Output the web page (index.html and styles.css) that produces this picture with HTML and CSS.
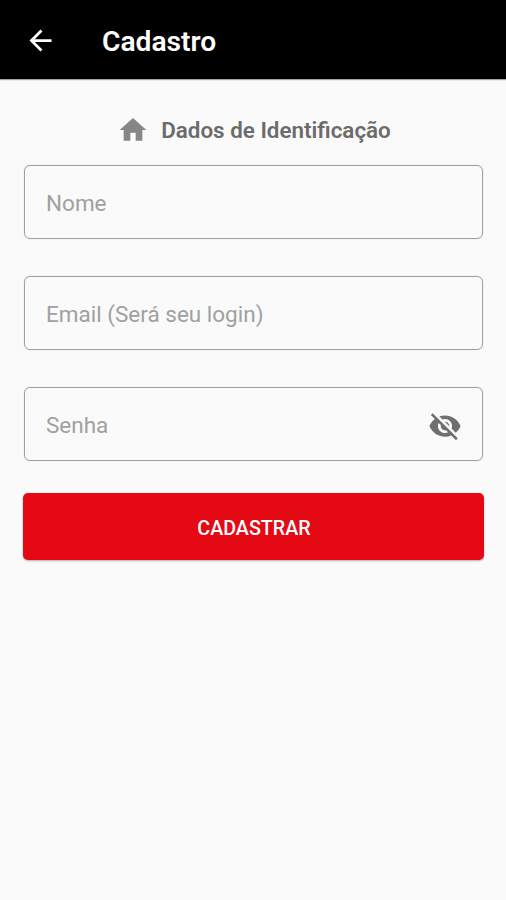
FILE: index.html
```html
<!DOCTYPE html>
<html lang="pt-BR">
<head>
<meta charset="utf-8">
<title>Cadastro</title>
<link rel="stylesheet" href="styles.css">
</head>
<body>
<header class="app-bar">
  <svg class="back" viewBox="0 0 24 24" aria-hidden="true"><path d="M20 11H7.83l5.59-5.59L12 4l-8 8 8 8 1.41-1.41L7.83 13H20v-2z"/></svg>
  <h1 class="title">Cadastro</h1>
</header>
<main class="form">
  <div class="section">
    <svg class="home" viewBox="0 0 24 24" aria-hidden="true"><path d="M10 20v-6h4v6h5v-8h3L12 3 2 12h3v8z"/></svg>
    <h2 class="section-title">Dados de Identificação</h2>
  </div>
  <div class="field"><span class="label">Nome</span></div>
  <div class="field"><span class="label">Email (Será seu login)</span></div>
  <div class="field password"><span class="label">Senha</span>
    <svg class="eye" viewBox="0 0 24 24" aria-hidden="true"><path d="M12 7c2.76 0 5 2.24 5 5 0 .65-.13 1.26-.36 1.83l2.92 2.92c1.51-1.26 2.7-2.89 3.43-4.75-1.73-4.39-6-7.5-11-7.5-1.4 0-2.74.25-3.98.7l2.16 2.16C10.74 7.13 11.35 7 12 7zM2 4.27l2.28 2.28.46.46C3.08 8.3 1.78 10.02 1 12c1.73 4.39 6 7.5 11 7.5 1.55 0 3.03-.3 4.38-.84l.42.42L19.73 22 21 20.73 3.27 3 2 4.27zM7.53 9.8l1.55 1.55c-.05.21-.08.43-.08.65 0 1.66 1.34 3 3 3 .22 0 .44-.03.65-.08l1.55 1.55c-.67.33-1.41.53-2.2.53-2.76 0-5-2.24-5-5 0-.79.2-1.53.53-2.2zm4.31-.78l3.15 3.15.02-.16c0-1.66-1.34-3-3-3l-.17.01z"/></svg>
  </div>
  <button class="submit" type="button">CADASTRAR</button>
</main>
</body>
</html>
```

FILE: styles.css
```css
* { box-sizing: border-box; }
body {
  margin: 0;
  min-height: 900px;
  background: #fafafa;
  font-family: Roboto, "Liberation Sans", sans-serif;
}
.app-bar {
  height: 79px;
  padding: 3px 24px 0;
  display: flex;
  align-items: center;
  background: #000;
  color: #fff;
  box-shadow: 0 1px 1px rgba(0, 0, 0, .35);
}
.back { width: 33px; height: 33px; margin: -2px 0 0 -.5px; fill: #fff; }
.title { margin: 2px 0 0 45.5px; font-size: 28.2px; line-height: 32px; font-weight: 600; }
.form { padding: 35px 23px 0 24px; display: flex; flex-direction: column; }
.section { height: 34px; margin-bottom: 17px; padding-left: 1px; display: flex; justify-content: center; align-items: center; gap: 12px; }
.home { width: 32px; height: 32px; margin-top: -3px; fill: #868686; }
.section-title { margin: -2px 0 0; font-size: 22.4px; line-height: 28px; font-weight: 600; color: #6b6b6b; }
.field {
  height: 74px;
  margin-bottom: 37px;
  padding: 2px 20px 0;
  display: flex;
  align-items: center;
  justify-content: space-between;
  border: 1px solid #a0a0a0;
  border-radius: 6px;
  box-shadow: 0 0 1px rgba(0, 0, 0, .3);
}
.label { margin-top: -1px; padding-left: 1px; font-size: 22.5px; color: #a0a0a0; }
.eye { width: 34px; height: 34px; margin-top: 1px; fill: #6f6f6f; }
.password { margin-bottom: 32px; }
.submit {
  height: 67px;
  margin: 0 -1px;
  padding: 3px 0 0 1px;
  border: 0;
  border-radius: 5px;
  background: #e50914;
  color: #fff;
  font: 500 19.7px Roboto, sans-serif;
  box-shadow: 0 1px 2px rgba(0, 0, 0, .3);
}
```
